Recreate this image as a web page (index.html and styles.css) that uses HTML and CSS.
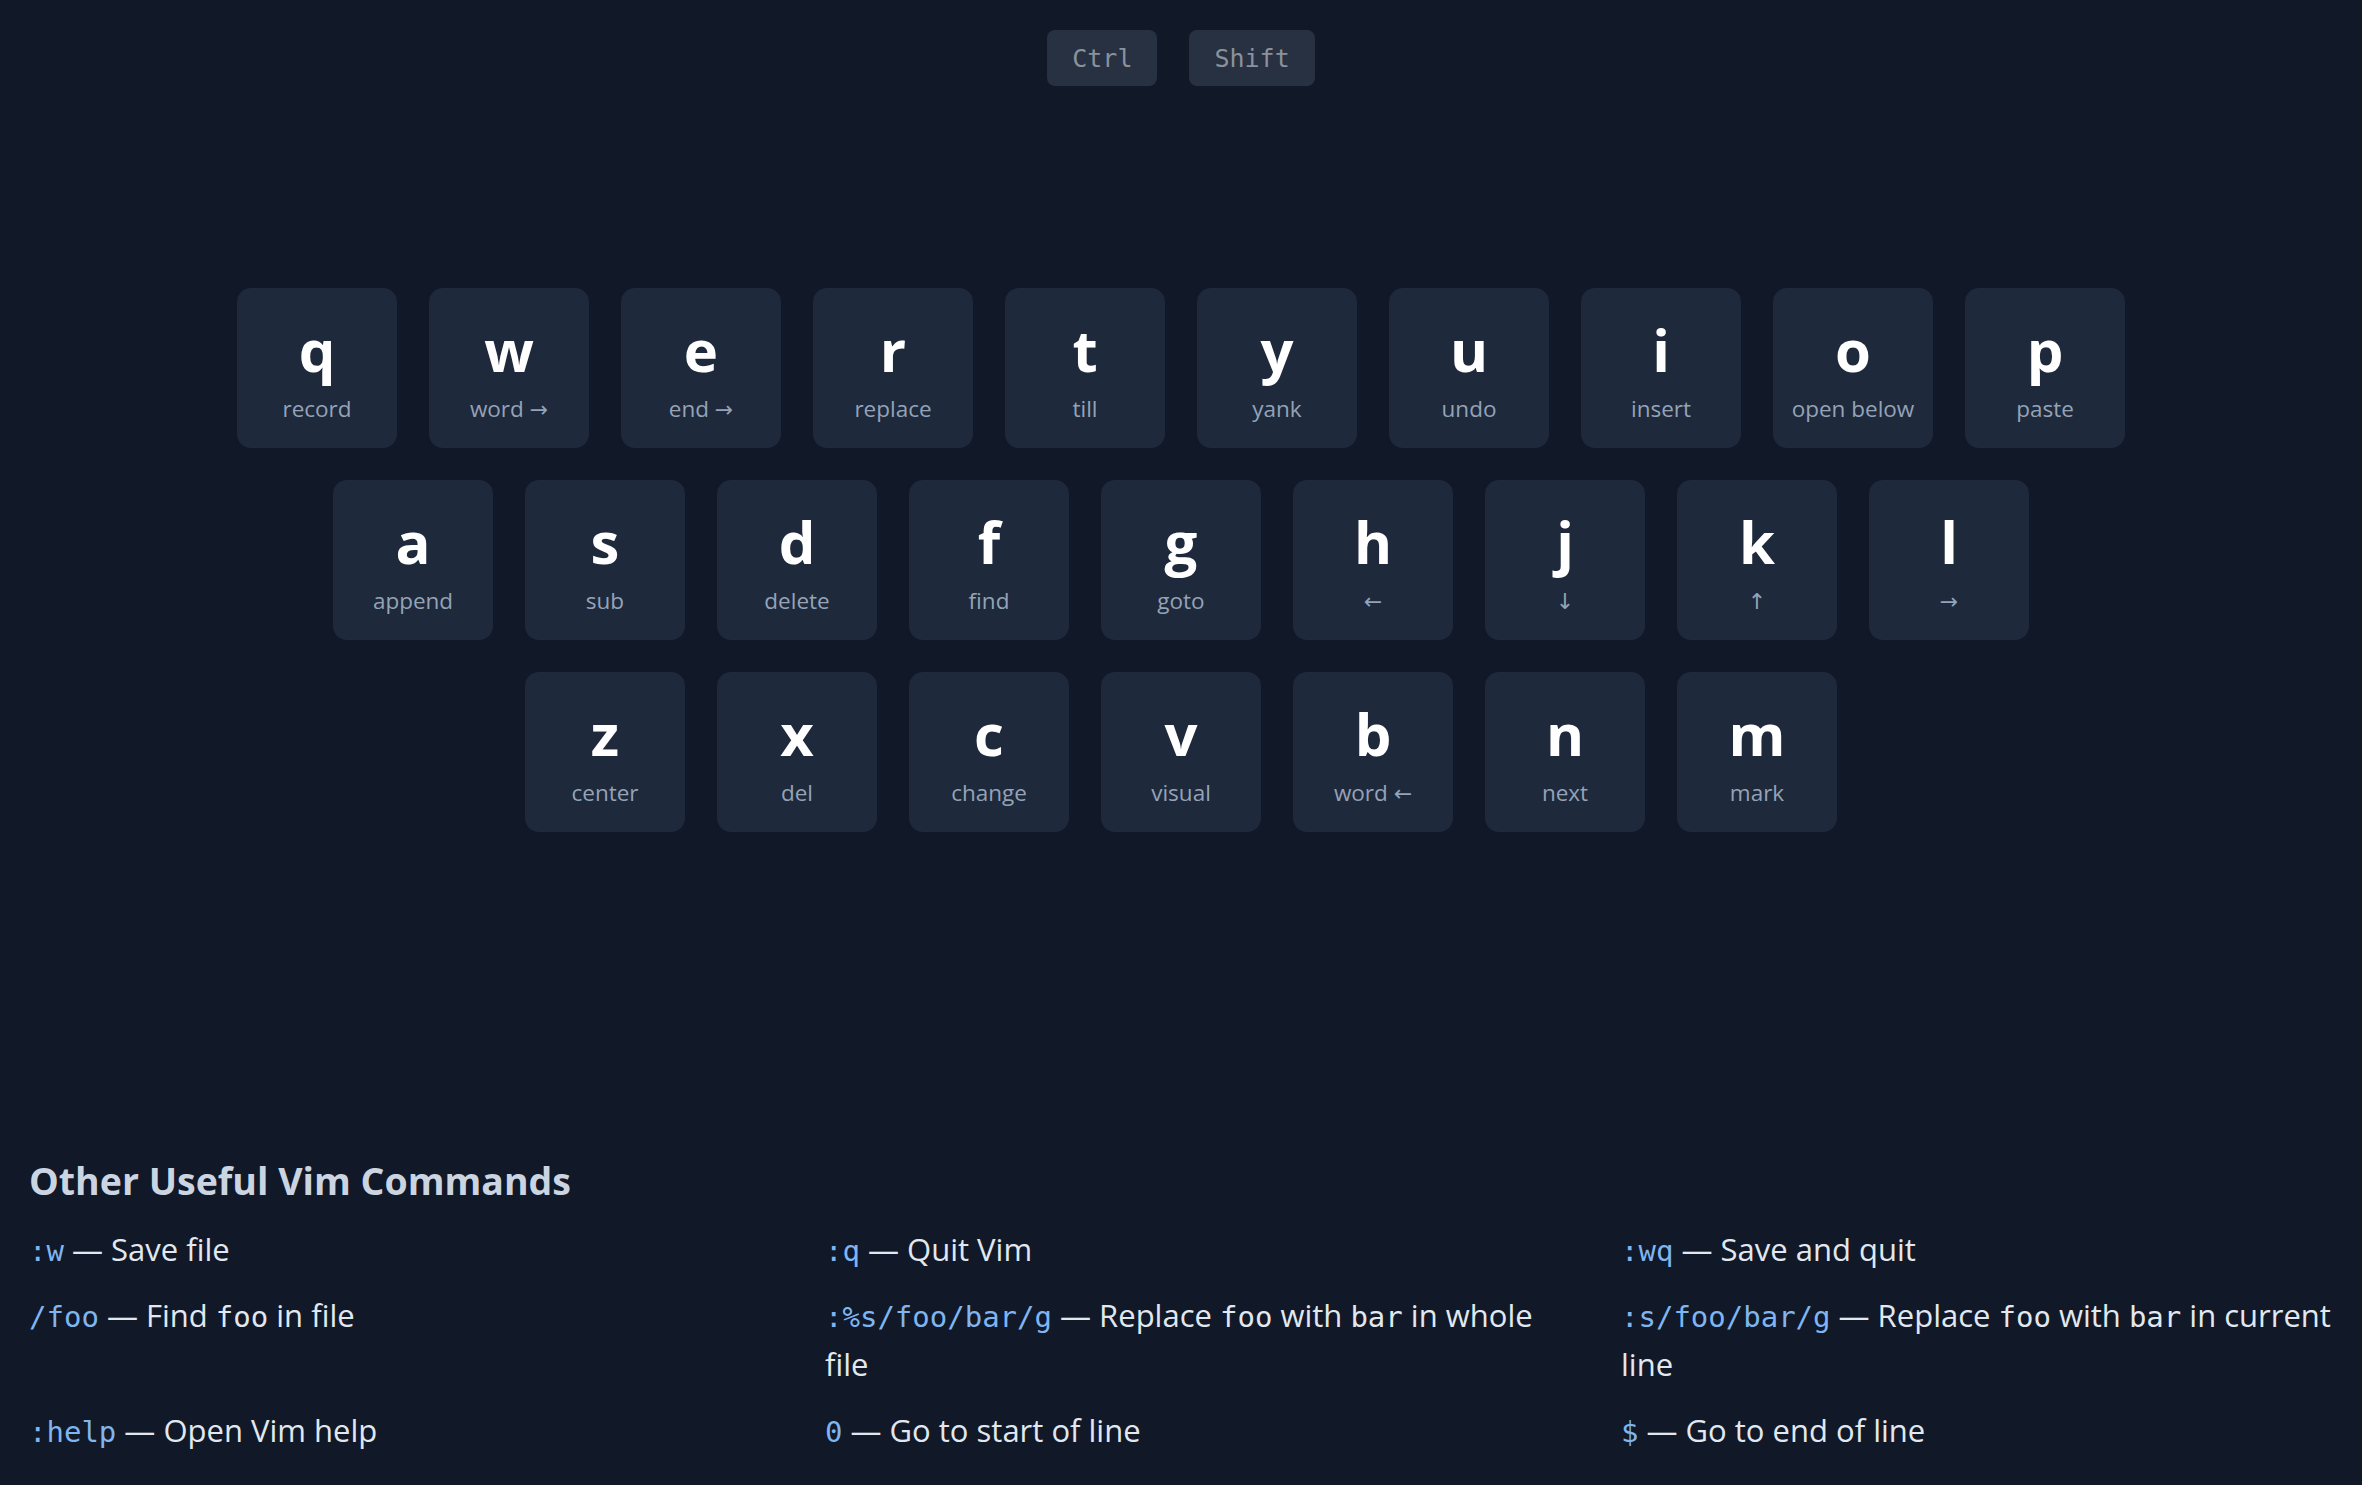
FILE: index.html
```html
<!DOCTYPE html>
<html lang="en">
<head>
<meta charset="utf-8">
<title>Vim Keyboard</title>
<link rel="stylesheet" href="styles.css">
</head>
<body>
<div class="modifiers">
  <span class="mod">Ctrl</span>
  <span class="mod">Shift</span>
</div>

<div class="keyboard">
  <div class="row">
    <div class="key"><span class="letter">q</span><span class="label">record</span></div>
    <div class="key"><span class="letter">w</span><span class="label">word <span class="arrow">→</span></span></div>
    <div class="key"><span class="letter">e</span><span class="label">end <span class="arrow">→</span></span></div>
    <div class="key"><span class="letter">r</span><span class="label">replace</span></div>
    <div class="key"><span class="letter">t</span><span class="label">till</span></div>
    <div class="key"><span class="letter">y</span><span class="label">yank</span></div>
    <div class="key"><span class="letter">u</span><span class="label">undo</span></div>
    <div class="key"><span class="letter">i</span><span class="label">insert</span></div>
    <div class="key"><span class="letter">o</span><span class="label">open below</span></div>
    <div class="key"><span class="letter">p</span><span class="label">paste</span></div>
  </div>
  <div class="row">
    <div class="key"><span class="letter">a</span><span class="label">append</span></div>
    <div class="key"><span class="letter">s</span><span class="label">sub</span></div>
    <div class="key"><span class="letter">d</span><span class="label">delete</span></div>
    <div class="key"><span class="letter">f</span><span class="label">find</span></div>
    <div class="key"><span class="letter">g</span><span class="label">goto</span></div>
    <div class="key"><span class="letter">h</span><span class="label"><span class="arrow">←</span></span></div>
    <div class="key"><span class="letter">j</span><span class="label"><span class="arrow">↓</span></span></div>
    <div class="key"><span class="letter">k</span><span class="label"><span class="arrow">↑</span></span></div>
    <div class="key"><span class="letter">l</span><span class="label"><span class="arrow">→</span></span></div>
  </div>
  <div class="row">
    <div class="key"><span class="letter">z</span><span class="label">center</span></div>
    <div class="key"><span class="letter">x</span><span class="label">del</span></div>
    <div class="key"><span class="letter">c</span><span class="label">change</span></div>
    <div class="key"><span class="letter">v</span><span class="label">visual</span></div>
    <div class="key"><span class="letter">b</span><span class="label">word <span class="arrow">←</span></span></div>
    <div class="key"><span class="letter">n</span><span class="label">next</span></div>
    <div class="key"><span class="letter">m</span><span class="label">mark</span></div>
  </div>
</div>

<section class="commands">
  <h2 class="commands-title">Other Useful Vim Commands</h2>
  <ul class="cmd-list">
    <li><code class="cmd">:w</code> — Save file</li>
    <li><code class="cmd">:q</code> — Quit Vim</li>
    <li><code class="cmd">:wq</code> — Save and quit</li>
    <li><code class="cmd">/foo</code> — Find <code class="plain">foo</code> in file</li>
    <li><code class="cmd">:%s/foo/bar/g</code> — Replace <code class="plain">foo</code> with <code class="plain">bar</code> in whole file</li>
    <li><code class="cmd">:s/foo/bar/g</code> — Replace <code class="plain">foo</code> with <code class="plain">bar</code> in current line</li>
    <li><code class="cmd">:help</code> — Open Vim help</li>
    <li><code class="cmd">0</code> — Go to start of line</li>
    <li><code class="cmd">$</code> — Go to end of line</li>
  </ul>
</section>
</body>
</html>
```

FILE: styles.css
```css
html {
  overflow: hidden;
}

body {
  margin: 0;
  background: #111827;
  font-family: "Open Sans", "Noto Sans", sans-serif;
  color: #e2e8f0;
}

.modifiers {
  display: flex;
  justify-content: center;
  gap: 32px;
  padding-top: 30px;
}

.mod {
  display: flex;
  align-items: center;
  height: 56px;
  padding: 0 25px;
  border-radius: 8px;
  background: #283142;
  color: #8b919b;
  font-family: "DejaVu Sans Mono", "Liberation Mono", monospace;
  font-size: 25px;
}

.keyboard {
  display: flex;
  flex-direction: column;
  align-items: center;
  gap: 32px;
  margin-top: 202px;
}

.row {
  display: flex;
  gap: 32px;
}

.key {
  box-sizing: border-box;
  width: 160px;
  height: 160px;
  padding-top: 32px;
  border-radius: 14px;
  background: #1e293b;
  display: flex;
  flex-direction: column;
  align-items: center;
}

.letter {
  font-size: 58px;
  font-weight: 700;
  line-height: 60px;
  color: #ffffff;
}

.label {
  margin-top: 13px;
  font-size: 22.5px;
  line-height: 32px;
  color: #94a3b8;
}

.arrow {
  font-family: "DejaVu Sans", sans-serif;
  font-size: 22px;
}

.commands {
  margin-top: 325px;
  padding-left: 29px;
}

.commands-title {
  margin: 0;
  font-size: 37.5px;
  font-weight: 700;
  line-height: 48px;
  color: #cbd5e1;
}

.cmd-list {
  list-style: none;
  margin: 20px 0 0;
  padding: 0;
  display: grid;
  grid-template-columns: repeat(3, 740px);
  column-gap: 56px;
  row-gap: 16px;
}

.cmd-list li {
  font-size: 31px;
  line-height: 49.5px;
  color: #e2e8f0;
}

.cmd,
.plain {
  font-family: "DejaVu Sans Mono", "Liberation Mono", monospace;
  font-size: 29px;
  line-height: 1;
}

.cmd {
  color: #7fb5f0;
}
```
